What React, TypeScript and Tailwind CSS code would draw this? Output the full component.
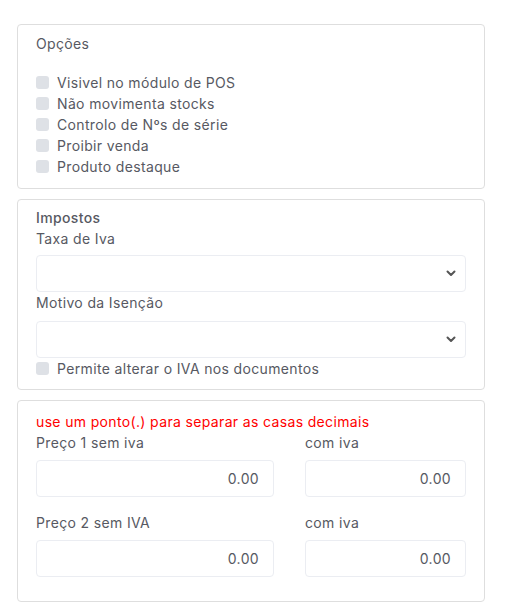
import type { ReactNode } from "react";

const FONT = { fontFamily: "Inter, 'Noto Sans', sans-serif" };

function Check({ label }: { label: string }) {
  return (
    <label className="flex h-[21px] items-center gap-[8px]">
      <span className="h-[13px] w-[13px] rounded-[3px] bg-[#dee1e6]" />
      <span>{label}</span>
    </label>
  );
}

function Card({ children, className }: { children: ReactNode; className: string }) {
  return <div className={`rounded-[4px] border border-[#dedede] bg-white px-[18px] ${className}`}>{children}</div>;
}

function Select() {
  return (
    <div className="flex h-[37px] items-center justify-end rounded-[4px] border border-[#ebedf2] pr-[9px]">
      <svg width="10" height="7" viewBox="0 0 10 7" fill="none">
        <path d="M1.5 1.5 5 5l3.5-3.5" stroke="#555" strokeWidth="2" strokeLinecap="round" strokeLinejoin="round" />
      </svg>
    </div>
  );
}

function Money() {
  return (
    <div className="flex h-[37px] items-center justify-end rounded-[4px] border border-[#ebedf2] pr-[14px] text-[#575962]">
      0.00
    </div>
  );
}

export default function App() {
  return (
    <div
      className="min-h-[612px] bg-white pt-[24px] text-[14px] leading-[21px] tracking-[0.35px] text-[#575962]"
      style={FONT}
    >
      <div className="mx-[17px] flex w-[468px] flex-col gap-[10px]">
        <Card className="pt-[8px] pb-[11px]">
          <div>Opções</div>
          <div className="mt-[18px]">
            <Check label="Visivel no módulo de POS" />
            <Check label="Não movimenta stocks" />
            <Check label="Controlo de Nºs de série" />
            <Check label="Proibir venda" />
            <Check label="Produto destaque" />
          </div>
        </Card>

        <Card className="pt-[8px] pb-[10px]">
          <div className="leading-[20px] font-medium">Impostos</div>
          <div>Taxa de Iva</div>
          <div className="mt-[6px]">
            <Select />
          </div>
          <div>Motivo da Isenção</div>
          <div className="mt-[8px]">
            <Select />
          </div>
          <Check label="Permite alterar o IVA nos documentos" />
        </Card>

        <Card className="pt-[10px] pb-[24px]">
          <div className="text-[#ff0000]">use um ponto(.) para separar as casas decimais</div>
          <div className="grid grid-cols-[238px_161px] gap-x-[31px]">
            <div>
              <div>Preço 1 sem iva</div>
              <div className="mt-[7px]">
                <Money />
              </div>
            </div>
            <div>
              <div>com iva</div>
              <div className="mt-[7px]">
                <Money />
              </div>
            </div>
            <div className="mt-[15px]">
              <div>Preço 2 sem IVA</div>
              <div className="mt-[7px]">
                <Money />
              </div>
            </div>
            <div className="mt-[15px]">
              <div>com iva</div>
              <div className="mt-[7px]">
                <Money />
              </div>
            </div>
          </div>
        </Card>
      </div>
    </div>
  );
}
